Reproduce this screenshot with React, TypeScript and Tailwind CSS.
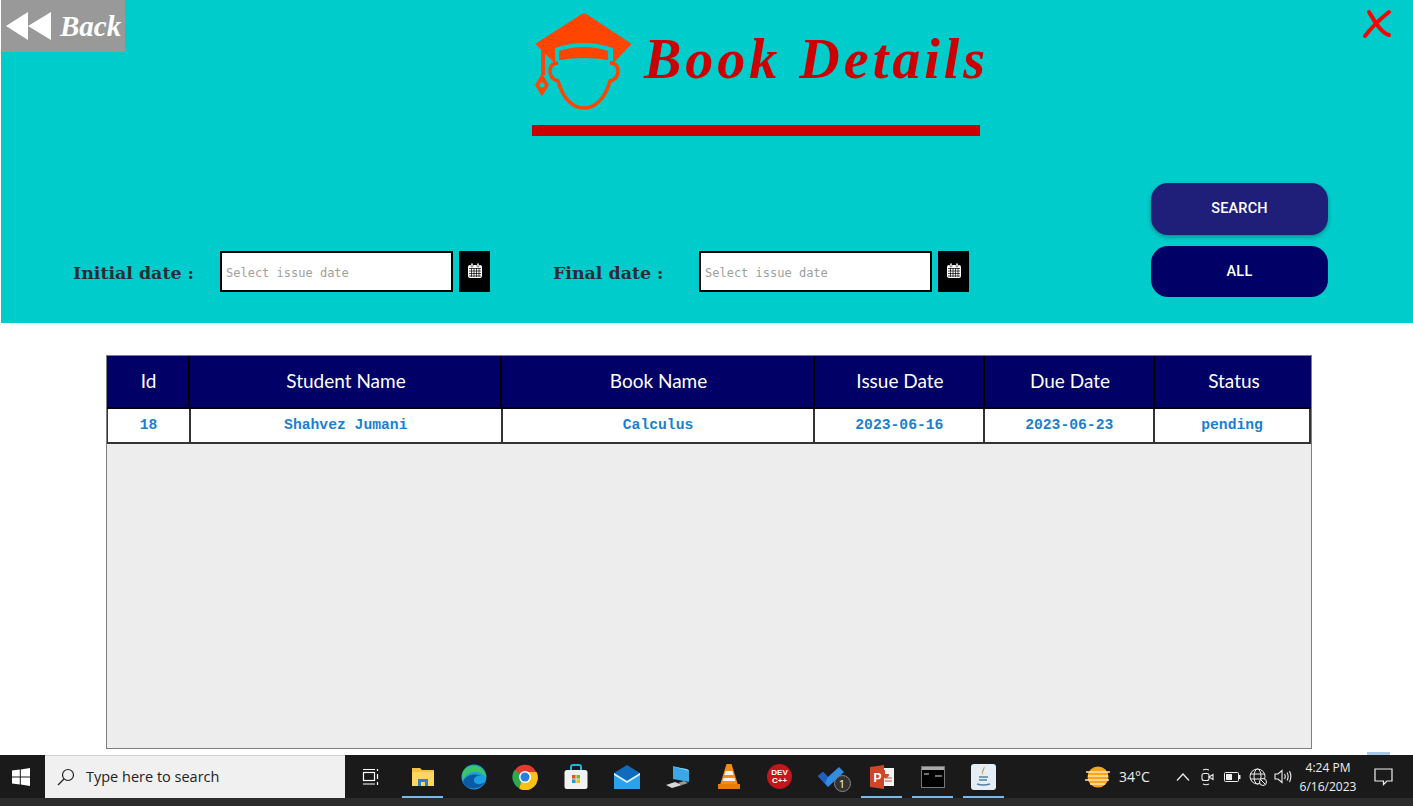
import type { ReactNode } from "react";

const columns = [
  { title: "Id", value: "18", width: "w-[83px]" },
  { title: "Student Name", value: "Shahvez Jumani", width: "w-[312px]" },
  { title: "Book Name", value: "Calculus", width: "w-[313px]" },
  { title: "Issue Date", value: "2023-06-16", width: "w-[170px]" },
  { title: "Due Date", value: "2023-06-23", width: "w-[170px]" },
  { title: "Status", value: "pending", width: "w-[156px]" },
];

function CapLogo() {
  return (
    <svg width="110" height="110" viewBox="0 0 110 110" className="shrink-0">
      <path d="M54 9 Q55 9 57 10 L101 39 L83 58 H25 L6 39 L51 10 Q53 9 54 9 Z" fill="#ff4500" stroke="#ff4500" strokeLinejoin="round" />
      <path d="M25 60 V43 Q54 33 83 43 V60 Z" fill="#00cccc" />
      <path d="M29 46 Q54 38 78 46 V55 Q54 51 29 55 Z" fill="#ff4500" />
      <path d="M28 58 Q20 58 20 66 Q20 74 28 76 C33 94 43 103 54 103 C65 103 75 94 80 76 Q88 74 88 66 Q88 58 80 58" fill="none" stroke="#ff4500" strokeWidth="3.5" />
      <path d="M13 42 V70" stroke="#ff4500" strokeWidth="4" />
      <path d="M12 70 L18 80 L12 90 L6 80 Z" fill="#ff4500" stroke="#ff4500" strokeLinejoin="round" strokeWidth="1.5" />
      <circle cx="12" cy="80" r="2.5" fill="#00cccc" />
    </svg>
  );
}

function CalendarButton() {
  return (
    <button className="w-[31px] h-[41px] bg-black flex items-center justify-center">
      <svg width="16" height="17" viewBox="0 0 16 17" className="-mt-[2px]">
        <rect x="1" y="3" width="14" height="13" rx="2" fill="#fff" />
        <rect x="4" y="1" width="2" height="4" rx="1" fill="#fff" stroke="#000" strokeWidth="0.5" />
        <rect x="10" y="1" width="2" height="4" rx="1" fill="#fff" stroke="#000" strokeWidth="0.5" />
        <path d="M2 6.5H14M2 9H14M2 11.5H14M2 14H14M4.5 6V15M7 6V15M9.5 6V15M12 6V15" stroke="#000" strokeWidth="0.7" />
      </svg>
    </button>
  );
}

function DateField({ label, labelWidth }: { label: string; labelWidth: string }) {
  return (
    <div className="flex items-center">
      <span className={`${labelWidth} pt-[4px] font-['DejaVu_Serif',serif] font-bold text-[17.4px] text-[#2b2b33] whitespace-nowrap`}>{label}</span>
      <div className="w-[233px] h-[41px] bg-white border-2 border-black flex items-center pl-[4px] pt-[3px] mr-[6px] font-['DejaVu_Sans_Mono',monospace] text-[12px] text-[#a0a0a0]">
        Select issue date
      </div>
      <CalendarButton />
    </div>
  );
}

function TaskIcon({ children, active }: { children: ReactNode; active?: boolean }) {
  return (
    <div className="w-[51px] shrink-0 h-full flex items-center justify-center relative">
      {children}
      {active && <div className="absolute bottom-0 left-[5px] right-[5px] h-[2px] bg-[#76b9ed]" />}
    </div>
  );
}

const trayIcon = "w-[25px] shrink-0 flex justify-center";

export default function App() {
  return (
    <div className="w-[1413px] h-[806px] flex flex-col overflow-hidden bg-white">
      <section className="h-[323px] ml-px bg-[#00cccc] flex flex-col shrink-0">
        <div className="flex items-start h-[183px]">
          <button className="w-[124px] h-[52px] shrink-0 bg-[#999999] flex items-center pl-[5px] gap-[9px]">
            <svg width="45" height="28" viewBox="0 0 45 28">
              <path d="M0 14 L22 0 V28 Z M22 14 L45 0 V28 Z" fill="#fff" />
            </svg>
            <span className="[font-family:cursive] italic font-bold text-[29px] leading-none text-white">Back</span>
          </button>
          <div className="ml-[405px] flex flex-col mt-[5px] shrink-0">
            <div className="flex items-center h-[110px]">
              <CapLogo />
              <h1 className="[font-family:cursive] italic font-bold text-[56px] leading-none tracking-[4px] whitespace-nowrap text-[#cc0000] ml-[4px] -mt-[2px]">
                Book Details
              </h1>
            </div>
            <div className="w-[448px] h-[11px] bg-[#cc0000] mt-[10px] ml-[2px]" />
          </div>
          <svg width="30" height="30" viewBox="0 0 30 30" className="ml-[373px] mt-[9px] shrink-0">
            <path d="M7 3 C12 11 18 23 27 26 M27 3 C18 10 10 18 3 27" fill="none" stroke="#ff0000" strokeWidth="4" strokeLinecap="round" />
          </svg>
        </div>
        <div className="flex items-start">
          <div className="flex items-center pl-[72px] gap-[63px] mt-[68px] shrink-0">
            <DateField label="Initial date :" labelWidth="w-[147px]" />
            <DateField label="Final date :" labelWidth="w-[146px]" />
          </div>
          <div className="ml-[182px] flex flex-col gap-[11px] font-['Roboto',sans-serif] font-medium text-[14.5px] tracking-[0.2px] text-white shrink-0">
            <button className="w-[177px] h-[52px] pb-[1px] rounded-[17px] bg-[#1f1f7a] shadow-[0_2px_4px_rgba(0,0,0,0.3)]">SEARCH</button>
            <button className="w-[177px] h-[51px] rounded-[17px] bg-[#000066]">ALL</button>
          </div>
        </div>
      </section>

      <main className="flex-1 pt-[32px] pl-[106px] pb-[6px]">
        <div className="w-[1206px] h-full bg-[#ededed] border border-[#7f7f7f] flex flex-col">
          <div className="flex h-[53px] bg-[#000066] border-b-2 border-black">
            {columns.map((c) => (
              <div key={c.title} className={`${c.width} border-r-2 last:border-r-0 border-black flex items-center justify-center pl-[2px] font-['Lato',sans-serif] text-[19px] text-white`}>
                {c.title}
              </div>
            ))}
          </div>
          <div className="flex h-[35px] bg-white border-b-2 border-[#333] border-l">
            {columns.map((c) => (
              <div key={c.title} className={`${c.width} border-r-2 border-[#333] flex items-center justify-center font-['Liberation_Mono',monospace] font-bold text-[14.7px] text-[#1b7fd1]`}>
                {c.value}
              </div>
            ))}
          </div>
        </div>
      </main>

      <footer className="h-[51px] shrink-0 bg-[#2c2c2c] flex flex-col relative">
        <div className="absolute -top-[3px] left-[1367px] w-[23px] h-[3px] bg-[#a8c8e8]" />
        <div className="h-[43px] bg-[#1a1a1a] flex items-stretch text-white font-['Open_Sans',sans-serif]">
          <div className="w-[45px] shrink-0 flex items-center justify-center pr-[4px]">
            <svg width="18" height="18" viewBox="0 0 18 18" fill="#fff">
              <path d="M0 2.6 L7.8 1.5 V8.5 H0 Z M8.8 1.4 L18 0 V8.5 H8.8 Z M0 9.5 H7.8 V16.5 L0 15.4 Z M8.8 9.5 H18 V18 L8.8 16.6 Z" />
            </svg>
          </div>
          <div className="w-[300px] shrink-0 bg-[#f0f0f0] flex items-center border-t border-[#d0d0d0]">
            <svg width="18" height="18" viewBox="0 0 18 18" fill="none" stroke="#222" strokeWidth="1.2" className="ml-[12px]">
              <circle cx="11" cy="7" r="5.5" />
              <path d="M7 11 L1 17" />
            </svg>
            <span className="ml-[11px] text-[14.5px] text-[#222] font-['Open_Sans',sans-serif]">Type here to search</span>
          </div>
          <div className="w-[52px] shrink-0 flex items-center justify-center">
            <svg width="18" height="18" viewBox="0 0 18 18" fill="none" stroke="#fff" strokeWidth="1.2">
              <rect x="1.5" y="4.5" width="11" height="8" />
              <path d="M1 1.5H13M1 16H13M15.5 1V3M15.5 6V11M15.5 14V17" />
            </svg>
          </div>
          <TaskIcon active>
            <svg width="24" height="20" viewBox="0 0 24 20">
              <path d="M1 1 H9 L11 3 H23 V19 H1 Z" fill="#f5c542" />
              <rect x="1" y="5" width="22" height="14" fill="#ffd75e" />
              <path d="M7 19 V12 H17 V19 H14 V15 H10 V19 Z" fill="#2f80c8" />
            </svg>
          </TaskIcon>
          <TaskIcon>
            <svg width="26" height="26" viewBox="0 0 26 26">
              <circle cx="13" cy="13" r="12.5" fill="#1b9de2" />
              <path d="M2 18 C4 10 18 8 22 14 C19 11 12 13 13 17 C14 21 20 21 24 18 C20 26 5 27 2 18 Z" fill="#0c59a4" />
              <path d="M1 11 C3 2 12 0 18 3 C23 5 25 10 25 14 C22 8 12 6 7 10 C5 11 3 14 2 17 Z" fill="#3ec26a" />
              <path d="M13 16 C14 11 20 10 25 14 C24 18 22 19 19 19 C15 20 13 18 13 16 Z" fill="#1b9de2" />
            </svg>
          </TaskIcon>
          <TaskIcon>
            <svg width="26" height="26" viewBox="0 0 26 26">
              <path d="M13 13 L2.5 7 A12 12 0 0 1 24 8 H13 Z" fill="#e33b2e" />
              <path d="M13 13 L7 24 A12.5 12.5 0 0 1 2.5 6 Z" fill="#2da94f" />
              <path d="M13 8 H24.5 A12.5 12.5 0 0 1 7 24.5 Z" fill="#fbc116" />
              <circle cx="13" cy="13" r="6" fill="#fff" />
              <circle cx="13" cy="13" r="4.5" fill="#2a7de1" />
            </svg>
          </TaskIcon>
          <TaskIcon>
            <svg width="24" height="26" viewBox="0 0 24 26">
              <path d="M7 8 V3 Q7 1 9 1 H15 Q17 1 17 3 V8" fill="none" stroke="#1fb6e0" strokeWidth="2" />
              <rect x="0.5" y="6" width="23" height="19" rx="2.5" fill="#f2f2f2" />
              <rect x="8" y="11" width="3.6" height="3.6" fill="#e8502a" />
              <rect x="12.4" y="11" width="3.6" height="3.6" fill="#74b83a" />
              <rect x="8" y="15.4" width="3.6" height="3.6" fill="#1f9de2" />
              <rect x="12.4" y="15.4" width="3.6" height="3.6" fill="#fdb913" />
            </svg>
          </TaskIcon>
          <TaskIcon>
            <svg width="26" height="24" viewBox="0 0 26 24">
              <path d="M0 8 L13 0 L26 8 V24 H0 Z" fill="#0f6cbd" />
              <path d="M0 8 L13 16 L26 8 V24 H0 Z" fill="#2aa3ec" />
              <path d="M0 8 L13 16 L26 8 V10 L13 18 L0 10 Z" fill="#dff2fd" />
            </svg>
          </TaskIcon>
          <TaskIcon>
            <svg width="24" height="24" viewBox="0 0 24 24">
              <path d="M7 1 L23 5 V17 L7 14 Z" fill="#3aa7e6" />
              <path d="M8 2 L23 6 L21 4 Z" fill="#8dd0f5" />
              <path d="M0 20 L9 17 L16 20 L6 23 Z" fill="#d8d8d8" />
              <path d="M12 18 L18 16 L22 18 L16 20 Z" fill="#9a9a9a" />
            </svg>
          </TaskIcon>
          <TaskIcon>
            <svg width="22" height="25" viewBox="0 0 22 25">
              <path d="M8.5 0 H13.5 L20 21 H2 Z" fill="#f58c0c" />
              <path d="M7.5 7 H14.5 L15.5 11 H6.3 Z M5.5 14 H16.5 L17.3 17 H4.5 Z" fill="#f4f4f4" />
              <path d="M0 20 H22 V25 H0 Z" fill="#e97c06" />
            </svg>
          </TaskIcon>
          <TaskIcon>
            <div className="w-[25px] h-[25px] rounded-full bg-[#c4161c] flex flex-col items-center justify-center font-['Liberation_Sans',sans-serif] font-bold text-[8px] leading-[8px] text-white">
              <span>DEV</span>
              <span>C++</span>
            </div>
          </TaskIcon>
          <TaskIcon>
            <div className="relative">
              <svg width="26" height="20" viewBox="0 0 26 20">
                <path d="M0 9 L5 5 L10 10 L21 0 L26 5 L10 20 Z" fill="#2f8de4" />
                <path d="M0 9 L5 5 L10 10 L7 16 Z" fill="#1f5fc0" />
              </svg>
              <div className="absolute -right-[7px] -bottom-[5px] w-[17px] h-[17px] rounded-full bg-[#333] border border-[#888] flex items-center justify-center text-[11px] leading-none text-white font-['Open_Sans',sans-serif]">1</div>
            </div>
          </TaskIcon>
          <TaskIcon active>
            <svg width="24" height="24" viewBox="0 0 24 24">
              <rect x="7" y="3" width="17" height="18" fill="#f4f4f4" />
              <path d="M15 5 A4 4 0 1 0 19 9 H15 Z" fill="#d9472b" />
              <path d="M15 13 H22 M15 16 H22" stroke="#d9472b" strokeWidth="1.2" />
              <path d="M0 2 L14 0 V24 L0 22 Z" fill="#d0452a" />
              <text x="3.5" y="16.5" fontSize="12" fontWeight="700" fill="#fff" fontFamily="Liberation Sans, sans-serif">P</text>
            </svg>
          </TaskIcon>
          <TaskIcon active>
            <svg width="24" height="22" viewBox="0 0 24 22">
              <rect x="0.5" y="0.5" width="23" height="21" fill="#000" stroke="#777" />
              <rect x="1" y="1" width="22" height="3" fill="#aaa" />
              <path d="M3 8 H8 M14 10 H21" stroke="#ddd" strokeWidth="1.2" />
            </svg>
          </TaskIcon>
          <TaskIcon active>
            <div className="w-[25px] h-[26px] rounded-[3px] bg-[#e6eef5] flex items-center justify-center">
              <svg width="15" height="21" viewBox="0 0 15 21">
                <path d="M8 0 C10 4 5 5 7 9 C4 6 8 4 8 0 Z" fill="#e76f00" />
                <path d="M3 11 H12 M3 14 H11 M1 18 Q7 20 14 18" fill="none" stroke="#5382a1" strokeWidth="1.5" />
              </svg>
            </div>
          </TaskIcon>
          <div className="ml-[72px] w-[34px] shrink-0 flex items-center justify-center">
            <svg width="26" height="22" viewBox="0 0 26 22">
              <circle cx="13" cy="11" r="10.5" fill="#f8a51c" />
              <path d="M1 6 H25 M3 10 H23 M0 14 H24 M5 18 H20" stroke="#ffe5b0" strokeWidth="1.3" />
            </svg>
          </div>
          <span className="ml-[4px] w-[31px] shrink-0 self-center text-[14px] text-[#eee] font-['Open_Sans',sans-serif] whitespace-nowrap">34°C</span>
          <div className="ml-[20px] flex items-center text-white shrink-0">
            <div className={trayIcon}>
              <svg width="14" height="8" viewBox="0 0 14 8" fill="none" stroke="#eee" strokeWidth="1.2">
                <path d="M1 7.5 L7 1 L13 7.5" />
              </svg>
            </div>
            <div className={trayIcon}>
              <svg width="13" height="18" viewBox="0 0 13 18" fill="none" stroke="#eee" strokeWidth="1.1">
                <rect x="1" y="5.5" width="7" height="7" rx="2" />
                <path d="M8 9 L12 6.5 V11.5 Z M2 2 Q5 0.5 8 2 M2 16 Q5 17.5 8 16" />
              </svg>
            </div>
            <div className={trayIcon}>
              <svg width="17" height="10" viewBox="0 0 17 10">
                <rect x="0.5" y="0.5" width="14" height="9" rx="1" fill="none" stroke="#eee" />
                <rect x="2" y="2" width="6" height="6" fill="#eee" />
                <rect x="15" y="3" width="1.5" height="4" fill="#eee" />
              </svg>
            </div>
            <div className={trayIcon}>
              <svg width="18" height="18" viewBox="0 0 18 18" fill="none" stroke="#eee" strokeWidth="1">
                <circle cx="8.5" cy="8.5" r="7.5" />
                <ellipse cx="8.5" cy="8.5" rx="3.5" ry="7.5" />
                <path d="M1 6 H16 M1 11 H16" />
                <circle cx="14" cy="14" r="3.5" fill="#1a1a1a" />
                <path d="M12 12 L16 16" />
              </svg>
            </div>
            <div className={trayIcon}>
              <svg width="18" height="15" viewBox="0 0 18 15" fill="none" stroke="#eee" strokeWidth="1.1">
                <path d="M1 5 H4 L8 1.5 V13.5 L4 10 H1 Z M10.5 5 Q12 7.5 10.5 10 M13 3.5 Q15.3 7.5 13 11.5 M15.5 2 Q18.2 7.5 15.5 13" />
              </svg>
            </div>
          </div>
          <div className="w-[66px] shrink-0 flex flex-col items-center justify-center text-[12px] leading-[19px] text-[#eee] font-['Open_Sans',sans-serif]">
            <span>4:24 PM</span>
            <span>6/16/2023</span>
          </div>
          <div className="ml-[2px] w-[40px] shrink-0 flex items-center justify-center">
            <svg width="19" height="18" viewBox="0 0 19 18" fill="none" stroke="#eee" strokeWidth="1.2">
              <path d="M1 1 H18 V13 H13 L9.5 16.5 V13 H1 Z" />
            </svg>
          </div>
        </div>
      </footer>
    </div>
  );
}
